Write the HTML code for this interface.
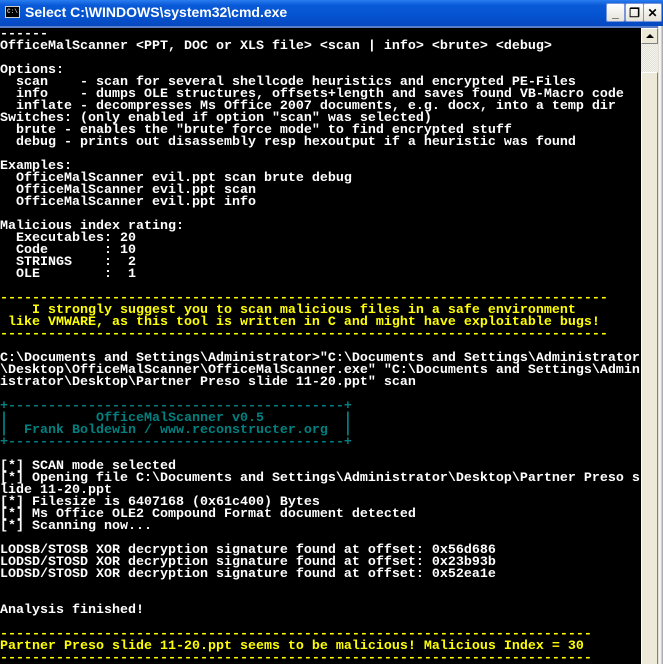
<!DOCTYPE html>
<html><head><style>
html,body{margin:0;padding:0;background:#000;width:663px;height:664px;overflow:hidden;position:relative}
#title{position:absolute;left:0;top:0;width:663px;height:26px;background:linear-gradient(#2a7cf0 0%,#0a5ad8 20%,#0553d0 60%,#0648c0 100%);}
#title .t{position:absolute;left:25px;top:4px;color:#fff;font:bold 14px "Liberation Sans",sans-serif;letter-spacing:0;}
#icon{position:absolute;left:5px;top:6px;width:15px;height:12px;background:#000;border:1px solid #ccc;box-sizing:border-box;color:#ccc;font:bold 6px "Liberation Mono",monospace;line-height:9px;text-indent:1px}
.btn{position:absolute;top:3px;width:19px;height:19px;background:linear-gradient(#fff,#e6e3d8);border:1px solid #7a96d8;box-sizing:border-box;color:#000;font:bold 12px "Liberation Sans",sans-serif;text-align:center;line-height:18px;border-radius:2px}
#sep{position:absolute;left:0;top:26px;width:663px;height:2px;background:#5a7ec8}
#term{position:absolute;left:0;top:29px;width:641px;height:635px;margin:0;color:#fff;font:bold 13.333px/12px "Liberation Mono",monospace;white-space:pre;overflow:hidden}
.y{color:#ffff00}.c{color:#008080}
#sb{position:absolute;left:641px;top:28px;width:17px;height:636px;background:repeating-conic-gradient(#f4f3ee 0 25%,#e4e1d6 0 50%) 0 0/2px 2px}
#up{position:absolute;left:641px;top:28px;width:17px;height:16px;background:#ece9d8;border:1px solid;border-color:#fff #808080 #808080 #fff;box-sizing:border-box}
#up:after{content:"";position:absolute;left:4px;top:5px;border:4px solid transparent;border-bottom:4px solid #000;border-top:0}
#thumb{position:absolute;left:641px;top:72px;width:17px;height:600px;background:#ece9d8;border:1px solid;border-color:#fff #808080 #808080 #fff;box-sizing:border-box}
#rb{position:absolute;left:658px;top:26px;width:5px;height:638px;background:linear-gradient(90deg,#d8d4c8,#fff 40%,#a0a0a0)}
</style></head><body>
<div id="title"><div id="icon">C:\</div><div class="t">Select C:\WINDOWS\system32\cmd.exe</div>
<div class="btn" style="left:606px">_</div><div class="btn" style="left:625px">&#x2750;</div><div class="btn" style="left:643px">✕</div></div>
<div id="sep"></div>
<pre id="term">------
OfficeMalScanner &lt;PPT, DOC or XLS file&gt; &lt;scan | info&gt; &lt;brute&gt; &lt;debug&gt;

Options:
  scan    - scan for several shellcode heuristics and encrypted PE-Files
  info    - dumps OLE structures, offsets+length and saves found VB-Macro code
  inflate - decompresses Ms Office 2007 documents, e.g. docx, into a temp dir
Switches: (only enabled if option "scan" was selected)
  brute - enables the "brute force mode" to find encrypted stuff
  debug - prints out disassembly resp hexoutput if a heuristic was found

Examples:
  OfficeMalScanner evil.ppt scan brute debug
  OfficeMalScanner evil.ppt scan
  OfficeMalScanner evil.ppt info

Malicious index rating:
  Executables: 20
  Code       : 10
  STRINGS    :  2
  OLE        :  1

<span class="y">----------------------------------------------------------------------------
    I strongly suggest you to scan malicious files in a safe environment
 like VMWARE, as this tool is written in C and might have exploitable bugs!
----------------------------------------------------------------------------</span>

C:\Documents and Settings\Administrator&gt;"C:\Documents and Settings\Administrator
\Desktop\OfficeMalScanner\OfficeMalScanner.exe" "C:\Documents and Settings\Admin
istrator\Desktop\Partner Preso slide 11-20.ppt" scan

<span class="c">+------------------------------------------+
|           OfficeMalScanner v0.5          |
|  Frank Boldewin / www.reconstructer.org  |
+------------------------------------------+</span>

[*] SCAN mode selected
[*] Opening file C:\Documents and Settings\Administrator\Desktop\Partner Preso s
lide 11-20.ppt
[*] Filesize is 6407168 (0x61c400) Bytes
[*] Ms Office OLE2 Compound Format document detected
[*] Scanning now...

LODSB/STOSB XOR decryption signature found at offset: 0x56d686
LODSD/STOSD XOR decryption signature found at offset: 0x23b93b
LODSD/STOSD XOR decryption signature found at offset: 0x52ea1e


Analysis finished!

<span class="y">--------------------------------------------------------------------------
Partner Preso slide 11-20.ppt seems to be malicious! Malicious Index = 30
--------------------------------------------------------------------------</span></pre>
<div id="sb"></div><div id="up"></div><div id="thumb"></div><div id="rb"></div>
</body></html>
